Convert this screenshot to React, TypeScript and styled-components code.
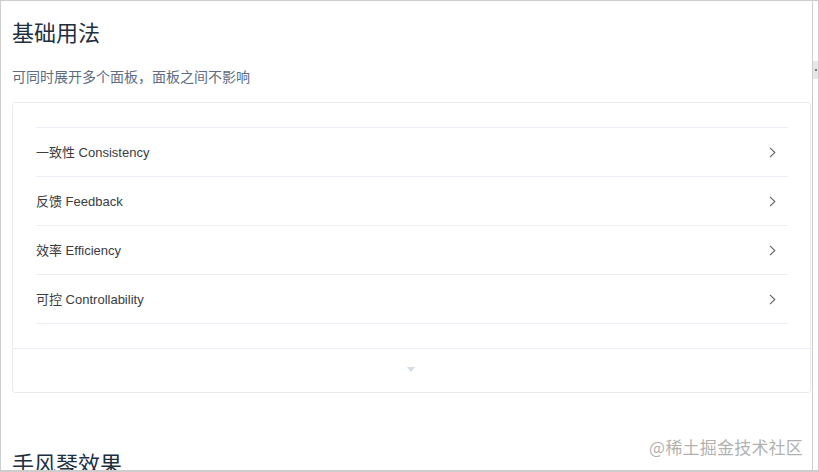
import React from "react"
import styled, { createGlobalStyle } from "styled-components"

const GlobalStyle = createGlobalStyle`
    html, body {
        margin: 0;
        padding: 0;
        background: #fff;
        overflow: hidden;
    }
    * { box-sizing: border-box; }
`

const Window = styled.div`
    position: relative;
    width: 819px;
    height: 472px;
    border: 1px solid #cdcdcd;
    border-bottom-width: 2px;
    display: flex;
    overflow: hidden;
    font-family: "Liberation Sans", "Noto Sans CJK SC", sans-serif;
`
const Content = styled.div`
    flex: 1;
    padding: 0 1px 0 11px;
    overflow: hidden;
`
const ScrollTrack = styled.div`
    width: 6px;
    border-left: 1px solid #cdcdcd;
    display: flex;
    flex-direction: column;
    align-items: center;
`
const ScrollThumb = styled.div`
    margin-top: 60px;
    width: 5px;
    height: 18px;
    background: #e6e6e6;
    display: flex;
    align-items: center;
    justify-content: center;
    &::after {
        content: "";
        width: 2px;
        height: 2px;
        background: #777;
    }
`
const Title = styled.h3`
    margin: 14px 0 0;
    font-size: 22px;
    line-height: 33px;
    font-weight: 400;
    color: #1f2f3d;
    font-family: "Noto Sans CJK SC", sans-serif;
`
const Desc = styled.p`
    margin: 18px 0 15px;
    font-size: 14px;
    line-height: 21px;
    color: #5e6d82;
    font-family: "Noto Sans CJK SC", sans-serif;
`
const DemoBlock = styled.div`
    border: 1px solid #ebebeb;
    border-radius: 3px;
`
const Source = styled.div`
    padding: 24px 22px 24px 23px;
`
const Collapse = styled.div`
    border-top: 1px solid #ebeef5;
`
const ItemHeader = styled.div`
    height: 49px;
    display: flex;
    align-items: center;
    border-bottom: 1px solid #ebeef5;
    font-size: 13px;
    color: #3a3c40;
    cursor: pointer;
`
const ItemTitle = styled.span`
    flex: 1;
    padding-bottom: 1px;
`
const Arrow = styled.svg`
    width: 7px;
    height: 11px;
    margin-right: 12px;
`
const Control = styled.div`
    height: 44px;
    border-top: 1px solid #eaeefb;
    display: flex;
    align-items: center;
    justify-content: center;
`
const Caret = styled.div`
    width: 0;
    height: 0;
    border-left: 4px solid transparent;
    border-right: 4px solid transparent;
    border-top: 5px solid #d3dce6;
    margin-left: -1px;
    margin-top: -2px;
`
const NextTitle = styled(Title)`
    margin-top: 53px;
`
const Watermark = styled.div`
    position: absolute;
    right: 15px;
    bottom: 12px;
    font-size: 17px;
    line-height: 22px;
    color: rgba(150, 150, 150, 0.75);
    font-family: "Noto Sans CJK SC", sans-serif;
    letter-spacing: 0.2px;
`

const items = [
    "一致性 Consistency",
    "反馈 Feedback",
    "效率 Efficiency",
    "可控 Controllability",
]

const ChevronRight = () => (
    <Arrow viewBox="0 0 7 11" fill="none">
        <path d="M1 0.8 L5.8 5.5 L1 10.2" stroke="#606266" strokeWidth="1.1" />
    </Arrow>
)

export default function App() {
    return (
        <Window>
            <GlobalStyle />
            <Content>
                <Title>基础用法</Title>
                <Desc>可同时展开多个面板，面板之间不影响</Desc>
                <DemoBlock>
                    <Source>
                        <Collapse>
                            {items.map((t) => (
                                <ItemHeader key={t}>
                                    <ItemTitle>{t}</ItemTitle>
                                    <ChevronRight />
                                </ItemHeader>
                            ))}
                        </Collapse>
                    </Source>
                    <Control>
                        <Caret />
                    </Control>
                </DemoBlock>
                <NextTitle>手风琴效果</NextTitle>
            </Content>
            <ScrollTrack>
                <ScrollThumb />
            </ScrollTrack>
            <Watermark>@稀土掘金技术社区</Watermark>
        </Window>
    )
}
